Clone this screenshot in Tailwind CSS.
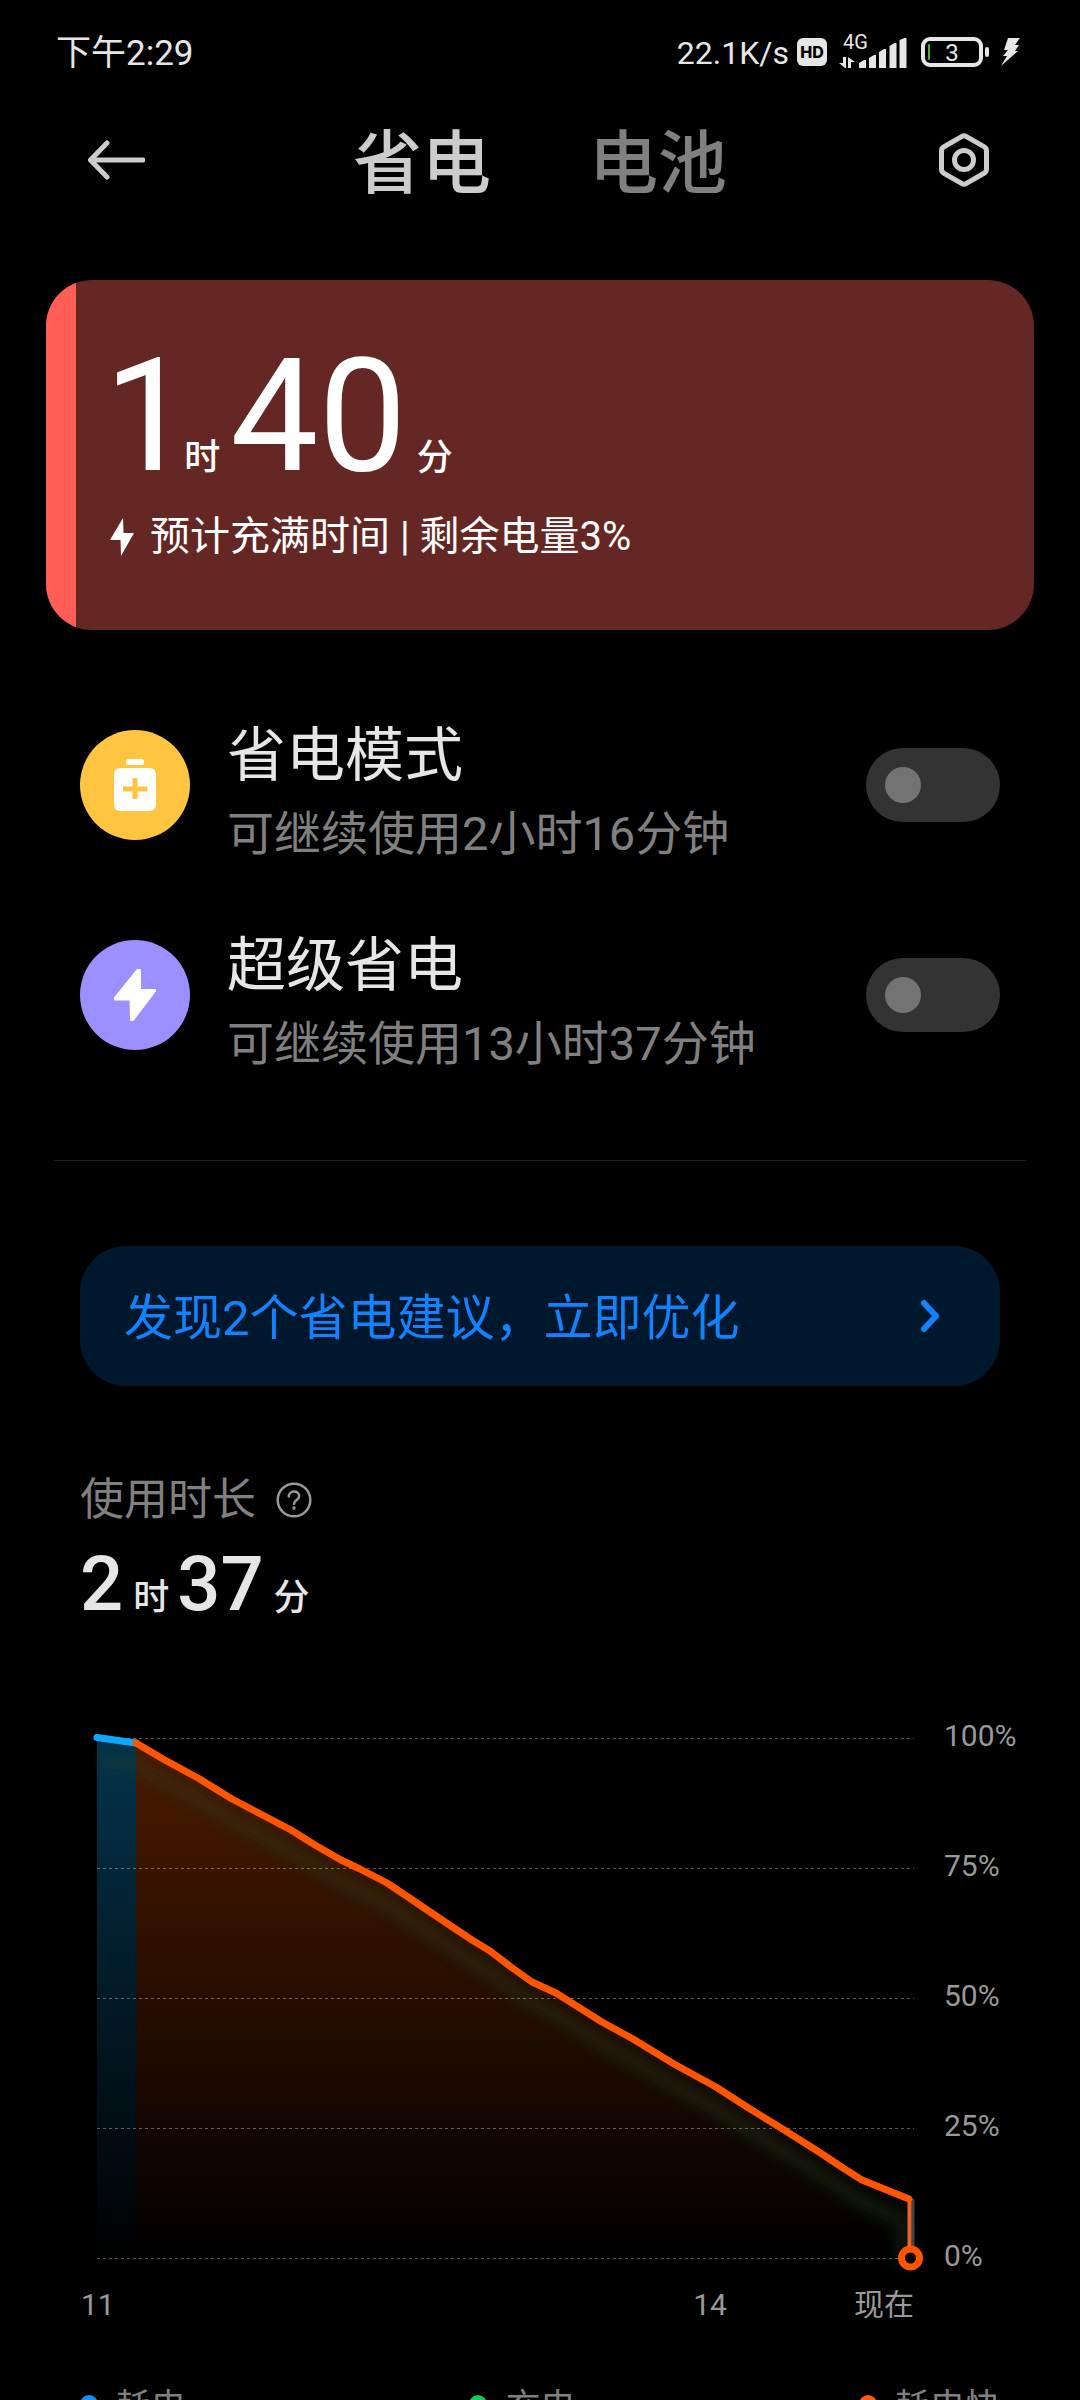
<!DOCTYPE html>
<html lang="zh-CN">
<head>
<meta charset="utf-8">
<meta name="viewport" content="width=device-width, initial-scale=1">
<title>省电与电池</title>
<script src="https://cdn.jsdelivr.net/npm/@tailwindcss/browser@4"></script>
</head>
<body class="flex h-screen flex-col overflow-hidden bg-black font-['Roboto','Noto_Sans_CJK_SC',sans-serif] text-[#e6e6e6]">

  <!-- System status bar -->
  <div class="flex h-[104px] shrink-0 items-center justify-between pr-[60px] pl-14 text-[35px] leading-10">
    <span class="pt-1">下午2:29</span>
    <div class="flex items-center">
      <span class="pt-0.5 text-[32px]">22.1K/s</span>
      <span class="ml-2 flex h-7 w-[30px] items-center justify-center rounded-md bg-[#e6e6e6] font-[Inter,sans-serif] text-base font-extrabold text-black">HD</span>
      <svg class="ml-3 h-9 w-[68px] overflow-visible" viewBox="0 0 68 36" fill="#e6e6e6" aria-label="4G 信号">
        <text x="4" y="15" font-size="20" font-family="Roboto">4G</text>
        <path d="M4 23h3v11H6L0 29h4zM9 34V23l7 5h-4v6zM20 34v-5l5-3h2v8zM30 34V24l5-3h2v13zM40 34V18l5-3h2v19zM50.500 34V12l5-3h2v25zM60.500 34V6l5-2h2v30z"/>
      </svg>
      <svg class="ml-3.5 h-[30px] w-[68px]" viewBox="0 0 68 30" aria-label="电量 3%">
        <rect x="2" y="2" width="58" height="26" rx="7" fill="none" stroke="#e6e6e6" stroke-width="4"/>
        <rect x="64" y="10" width="4" height="10" rx="2" fill="#e6e6e6"/>
        <rect x="7" y="7" width="2" height="16" rx="1" fill="#55b02c"/>
        <text x="31" y="23.500" font-size="24" text-anchor="middle" font-family="Roboto" fill="#e6e6e6">3</text>
      </svg>
      <svg class="ml-3 h-7 w-[19px]" viewBox="0 0 19 28" fill="#e6e6e6" aria-label="充电中"><path d="M7 0h12l-5 7h4l-4 6h3L0 28l6-10H2l5-6H3z"/></svg>
    </div>
  </div>

  <!-- Navigation -->
  <header class="flex h-28 shrink-0 items-center justify-between px-[87px]">
    <button type="button" aria-label="返回">
      <svg class="h-11 w-[58px]" viewBox="0 0 58 44" fill="none" stroke="#ccc" stroke-width="5" stroke-linecap="round" stroke-linejoin="round"><path d="M3.500 22H56M20 5 3.500 22 20 39"/></svg>
    </button>
    <nav class="flex gap-[98px] pt-2.5 text-[69px] leading-[100px] font-medium">
      <a href="#saver" aria-current="page" class="text-[#ccc]">省电</a>
      <a href="#battery" class="text-[#808080]">电池</a>
    </nav>
    <button type="button" aria-label="设置" class="flex w-[58px] justify-center">
      <svg class="h-14 w-[54px]" viewBox="0 0 54 56" fill="none" stroke="#ccc" stroke-width="5" stroke-linejoin="round"><path d="M25 4.300q2-1.200 4 0l18 10.400q2.500 1.400 2.500 4v18.600q0 2.600-2.500 4L29 51.700q-2 1.200-4 0L7 41.300q-2.500-1.400-2.500-4V18.700q0-2.600 2.500-4z"/><circle cx="27" cy="28" r="9.500"/></svg>
    </button>
  </header>

  <main class="grow overflow-y-auto [scrollbar-width:none]">
    <!-- Charging estimate -->
    <section class="mx-[46px] mt-16 flex overflow-hidden rounded-[46px] bg-[#652723] text-white">
      <div class="w-[30px] shrink-0 bg-[#ff5e57]"></div>
      <div class="pt-[61px] pb-[63px] pl-7">
        <p class="flex items-baseline text-[157px] leading-[150px]">
          <span>1</span><span class="ml-[-8px] text-[36px] leading-10 font-medium">时</span>
          <span class="ml-2.5">40</span><span class="ml-2.5 text-[36px] leading-10 font-medium">分</span>
        </p>
        <p class="mt-4 flex items-center text-[40px] leading-[60px]">
          <svg class="mr-4 ml-1.5 h-[38px] w-6" viewBox="0 0 24 38" fill="#fff" aria-hidden="true"><path d="M13 0 0 22h10.500L11 38 24 15H13.500z"/></svg>
          <span>预计充满时间 | 剩余电量3%</span>
        </p>
      </div>
    </section>

    <!-- Saver modes -->
    <section class="px-20 pt-[50px] pb-[60px]">
      <label class="flex h-[210px] items-center">
        <svg class="size-[110px] shrink-0" viewBox="0 0 110 110" aria-hidden="true">
          <circle cx="55" cy="55" r="55" fill="#ffc440"/>
          <rect x="46" y="29" width="18" height="6" rx="2.500" fill="#fff"/>
          <rect x="34" y="38" width="42" height="43" rx="6" fill="#fff"/>
          <path d="M55 48v21M43 59h24" stroke="#ffc440" stroke-width="5"/>
        </svg>
        <span class="ml-[37px] grow pt-[18px]">
          <span class="block text-[59px] leading-[80px]">省电模式</span>
          <span class="block text-[47px] leading-[76px] text-[#808080]">可继续使用2小时16分钟</span>
        </span>
        <input type="checkbox" role="switch" class="flex h-[74px] w-[134px] shrink-0 appearance-none items-center rounded-full bg-[#333] before:ml-[19px] before:block before:size-9 before:rounded-full before:bg-[#737373] before:content-['']">
      </label>
      <label class="flex h-[210px] items-center">
        <svg class="size-[110px] shrink-0" viewBox="0 0 110 110" aria-hidden="true">
          <circle cx="55" cy="55" r="55" fill="#9c8fff"/>
          <path d="M57.500 30 35 58v1.500h15.500L51 80h2L75 51v-1H60V30z" fill="#fff" stroke="#fff" stroke-width="2" stroke-linejoin="round"/>
        </svg>
        <span class="ml-[37px] grow pt-[18px]">
          <span class="block text-[59px] leading-[80px]">超级省电</span>
          <span class="block text-[47px] leading-[76px] text-[#808080]">可继续使用13小时37分钟</span>
        </span>
        <input type="checkbox" role="switch" class="flex h-[74px] w-[134px] shrink-0 appearance-none items-center rounded-full bg-[#333] before:ml-[19px] before:block before:size-9 before:rounded-full before:bg-[#737373] before:content-['']">
      </label>
    </section>

    <hr class="mx-[54px] border-[#222]">

    <a href="#suggestions" class="mx-20 mt-[85px] flex h-[140px] items-center justify-between rounded-[46px] bg-[#00182d] pr-[59px] pl-[44px] text-[49px] leading-[72px] text-[#1283ff]">
      <span class="pt-1.5">发现2个省电建议，立即优化</span>
      <svg class="h-9 w-[22px]" viewBox="0 0 22 36" fill="none" stroke="#1283ff" stroke-width="6" stroke-linecap="round" stroke-linejoin="round" aria-hidden="true"><path d="m5 5 12 13L5 31"/></svg>
    </a>

    <!-- Usage time -->
    <section class="px-20 pt-[82px]">
      <h2 class="flex items-center text-[44px] leading-[64px] text-[#808080]">
        使用时长
        <button type="button" aria-label="使用时长说明" class="ml-5">
          <svg class="size-9" viewBox="0 0 36 36" fill="none" stroke="#999" stroke-width="2.500" stroke-linecap="round"><circle cx="18" cy="18" r="16.300"/><path d="M12.800 14.500c0-6.500 10.400-6.500 10.400-.5 0 4-5.200 4-5.200 8"/><circle cx="18" cy="26" r="1" fill="#999" stroke-width="1.500"/></svg>
        </button>
      </h2>
      <p class="flex items-baseline pt-1 text-[76px] leading-[96px] font-medium">
        <span>2</span><span class="ml-2.5 text-[36px] leading-10">时</span>
        <span class="ml-2">37</span><span class="ml-2.5 text-[36px] leading-10">分</span>
      </p>
    </section>

    <!-- Battery level chart -->
    <section class="pt-[86px] pr-[60px] pl-[97px] text-[30px] leading-9 text-[#999]">
      <div class="flex">
        <div class="grow pt-5 pb-4">
          <svg class="block h-[520px] w-full overflow-visible" viewBox="0 0 817 520" preserveAspectRatio="none" role="img" aria-label="电量变化曲线">
            <defs>
              <linearGradient id="drain" x1="0" y1="0" x2="0" y2="520" gradientUnits="userSpaceOnUse"><stop offset="0" stop-color="#4d1b00"/><stop offset="1" stop-color="#4d1b00" stop-opacity="0"/></linearGradient>
              <linearGradient id="idle" x1="0" y1="0" x2="0" y2="520" gradientUnits="userSpaceOnUse"><stop offset="0" stop-color="#04344c"/><stop offset="1" stop-color="#04344c" stop-opacity="0"/></linearGradient>
              <filter id="soft" x="-10%" y="-10%" width="120%" height="120%"><feGaussianBlur stdDeviation="7"/></filter>
            </defs>
            <path d="M0 0 39 5V520H0z" fill="url(#idle)"/>
            <path d="M39 5 66 21 101 40 135 61 156 72 175 82 194 92 218 107 244 122 263 131 290 145 314 161 345 182 375 202 393 213 414 229 435 244 459 255 505 284 536 301 577 326 619 349 650 369 684 390 722 414 746 430 765 442 812 461V520H39z" fill="url(#drain)"/>
            <path transform="translate(0 22)" d="M4 0 39 5 66 21 101 40 135 61 156 72 175 82 194 92 218 107 244 122 263 131 290 145 314 161 345 182 375 202 393 213 414 229 435 244 459 255 505 284 536 301 577 326 619 349 650 369 684 390 722 414 746 430 765 442 806 461V505" fill="none" stroke="#1f3f24" stroke-opacity=".4" stroke-width="14" filter="url(#soft)"/>
            <path d="M0 .500H817M0 130.500H817M0 260.500H817M0 390.500H817M0 520.500H817" stroke="#fff" stroke-opacity=".35" stroke-dasharray="3 3"/>
            <path d="M0-.500 39 5" stroke="#0fa8ff" stroke-width="7" stroke-linecap="round"/>
            <path d="M816 461V510" stroke="#444" stroke-width="3"/>
            <path d="M812.500 461V510" stroke="#e8622a" stroke-width="4"/>
            <path d="M39 5 66 21 101 40 135 61 156 72 175 82 194 92 218 107 244 122 263 131 290 145 314 161 345 182 375 202 393 213 414 229 435 244 459 255 505 284 536 301 577 326 619 349 650 369 684 390 722 414 746 430 765 442 812 461" fill="none" stroke="#ff5500" stroke-width="7" stroke-linecap="round" stroke-linejoin="round"/>
            <circle cx="813.500" cy="520" r="9" fill="#000" stroke="#ff5500" stroke-width="7"/>
          </svg>
        </div>
        <div class="ml-[30px] flex w-[76px] shrink-0 flex-col justify-between">
          <span>100%</span><span>75%</span><span>50%</span><span>25%</span><span>0%</span>
        </div>
      </div>
      <div class="mr-[106px] ml-[-16px] flex pt-[13px]">
        <span class="w-[73.5%]">11</span><span>14</span><span class="ml-auto">现在</span>
      </div>
    </section>

    <ul class="flex justify-between px-20 pt-[51px] text-[35px] leading-[52px] text-[#808080]">
      <li class="flex items-center gap-[18px]"><span class="size-[18px] rounded-full bg-[#0d92ff]"></span><span class="pt-2">耗电</span></li>
      <li class="flex items-center gap-[18px]"><span class="size-[18px] rounded-full bg-[#14cc4b]"></span><span class="pt-2">充电</span></li>
      <li class="flex items-center gap-[18px]"><span class="size-[18px] rounded-full bg-[#ff5a0d]"></span><span class="pt-2">耗电快</span></li>
    </ul>
  </main>
</body>
</html>
